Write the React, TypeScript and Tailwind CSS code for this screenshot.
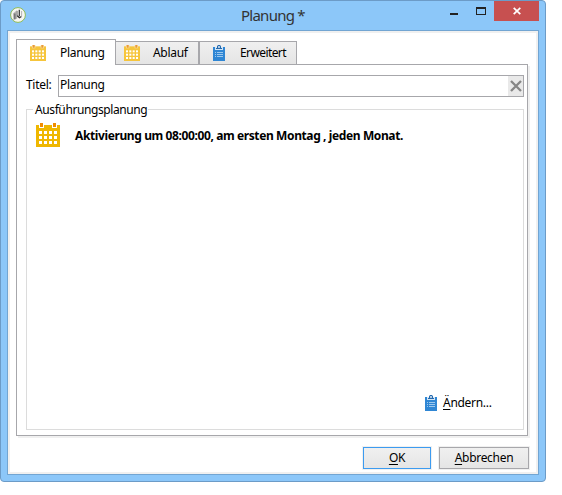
import React from "react";

function CalendarIcon({ size, soft = false }: { size: number; soft?: boolean }) {
  const body = soft ? "#f6c53c" : "#efb700";
  const clip = soft ? "#e9983a" : "#f08c00";
  return (
    <svg width={size} height={size} viewBox="0 0 24 24" shapeRendering={soft ? "auto" : "crispEdges"} className="block shrink-0">
      <rect x="0" y="2" width="24" height="22" fill={body} />
      <path d="M3 0h5v5H3zM16 0h5v5h-5z" fill={soft ? "#fbe3a0" : "#fff"} />
      <path d="M4 0h3v4H4zM17 0h3v4h-3z" fill={clip} />
      {[8, 13, 18].map((y) =>
        [3, 8, 13, 18].map((x) => <rect key={`${x}-${y}`} x={x} y={y} width="3" height="3" fill="#fff" />)
      )}
    </svg>
  );
}

function ClipboardIcon() {
  return (
    <svg width="12" height="16" viewBox="0 0 12 16" className="block shrink-0">
      <rect x="0" y="2" width="12" height="14" fill="#2f86d4" />
      <path d="M2 2h8v3H2z" fill="#d3e5f5" />
      <path d="M3 4V3h1V1.6C4 .6 4.8 0 6 0s2 .6 2 1.6V3h1v1z" fill="#2469ad" />
      <rect x="5.2" y="1.2" width="1.6" height="1.6" fill="#fff" />
      <path d="M2 7.5h1M4 7.5h6M2 9.5h1M4 9.5h6M2 11.5h1M4 11.5h6" stroke="#a9cff0" strokeWidth=".9" />
    </svg>
  );
}

function AppIcon() {
  return (
    <svg width="16" height="16" viewBox="0 0 16 16" className="block">
      <circle cx="8" cy="8" r="7.4" fill="#f6f6f2" stroke="#8dbb55" />
      <path d="M3 6.5 7.2 3v8.5L3.4 13z" fill="#b5b5b2" />
      <path d="M4.8 6.5v5.8" stroke="#77777a" strokeWidth="1.6" />
      <path d="M7.2 4v5" stroke="#777" strokeWidth=".8" />
      <path d="M9.3 2.8v6.4M7.2 8.8l2.2 2 2-1.4" stroke="#303030" strokeWidth="1.2" fill="none" />
      <path d="M11.6 4v5" stroke="#b5b5b5" />
    </svg>
  );
}

export default function App() {
  return (
    <div className="h-[495px] w-[562px] bg-white font-['Noto_Sans','Open_Sans',sans-serif] text-[12px] leading-4 tracking-[-0.3px] text-black">
      <div className="flex h-[482px] w-[546px] flex-col rounded-[4px] border border-[#6c9bc7] bg-[#8cc7f9] px-[6px] pb-[6px]">
        <header className="flex h-[29px] shrink-0 items-start">
          <div className="mt-[6px] ml-[3px] w-[126px]"><AppIcon /></div>
          <h1 className="mt-1 w-[262px] pl-[105px] text-[15px] leading-5 tracking-[-0.75px] whitespace-nowrap text-[#333]">Planung *</h1>
          <div className="ml-auto flex">
            <div className="flex h-5 w-[45px]">
              <svg width="45" height="20" viewBox="0 0 45 20" shapeRendering="crispEdges">
                <path d="M1 12h8v2H1z" fill="#222" />
                <path d="M27 6h10v8H27zM28 8v5h8V8z" fill="#222" fillRule="evenodd" />
              </svg>
            </div>
            <div className="flex h-5 w-[45px] items-center justify-center bg-[#c75050]">
              <svg width="8" height="8" viewBox="0 0 8 8"><path d="M.7.8l6.6 6.4M7.3.8.7 7.2" stroke="#fff" strokeWidth="1.7" /></svg>
            </div>
          </div>
        </header>

        <main className="h-[445px] w-[532px] border border-[#72a5d2] bg-[#f0f0f0] p-[2px]">
          <div className="h-full bg-white pt-[6px] pl-[6px]">
            <nav className="flex h-[26px] items-end">
              <div className="relative z-10 flex h-[26px] w-[100px] border border-b-0 border-[#a7a7ab] bg-white pt-[5px] pl-[13px]">
                <CalendarIcon size={16} soft />
                <span className="ml-[14px]">Planung</span>
              </div>
              <div className="flex h-6 w-[83px] border border-l-0 border-[#a7a7ab] bg-linear-to-b from-[#f0f0f0] to-[#e5e5e5] pt-[3px] pl-2">
                <CalendarIcon size={16} soft />
                <span className="ml-[13px]">Ablauf</span>
              </div>
              <div className="flex h-6 w-[98px] border border-[#a7a7ab] bg-linear-to-b from-[#f0f0f0] to-[#e5e5e5] pt-[3px] pl-[13px]">
                <ClipboardIcon />
                <span className="ml-[15px] tracking-[-0.6px]">Erweitert</span>
              </div>
            </nav>

            <section className="-mt-px h-[372px] w-[512px] border border-[#a7a7ab] bg-white pt-[10px] pl-[9px] shadow-[2px_2px_0_#f0f0f0]">
              <div className="flex h-[22px] items-start">
                <label className="mt-[2px] w-8">Titel:</label>
                <div className="flex h-[22px] w-[466px] border border-[#a7a7ab]">
                  <span className="w-[449px] pt-px pl-px">Planung</span>
                  <div className="flex w-[15px] items-center justify-center bg-[#e9e9e9]">
                    <svg width="12" height="12" viewBox="0 0 12 12"><path d="M1 1l10 10M11 1 1 11" stroke="#868686" strokeWidth="2.3" /></svg>
                  </div>
                </div>
              </div>
              <div className="mt-3 flex h-[321px] w-[498px] flex-col border border-[#dcdcdc]">
                <div className="-mt-[8px] ml-[6px] h-4 w-[115px] bg-white pl-[2px] tracking-[-0.4px] whitespace-nowrap">Ausführungsplanung</div>
                <div className="mt-[5px] ml-[9px] flex">
                  <CalendarIcon size={24} />
                  <strong className="mt-[5px] ml-[15px] font-bold tracking-[-0.39px] whitespace-nowrap">Aktivierung um 08:00:00, am ersten Montag , jeden Monat.</strong>
                </div>
                <div className="mt-auto mb-[18px] ml-[398px] flex">
                  <ClipboardIcon />
                  <span className="ml-[6px]"><u className="underline underline-offset-2">Ä</u>ndern...</span>
                </div>
              </div>
            </section>

            <footer className="mt-[11px] ml-[347px] flex gap-2">
              <button className="h-[22px] w-[68px] border border-[#3c9bf0] bg-linear-to-b from-[#f0f0f0] to-[#e5e5e5] shadow-[0_0_0_1px_#f0f0f0]"><u className="underline-offset-2">O</u>K</button>
              <button className="h-[22px] w-[90px] border border-[#a7a7ab] bg-linear-to-b from-[#f0f0f0] to-[#e5e5e5] shadow-[0_0_0_1px_#f0f0f0]"><u className="underline-offset-2">A</u>bbrechen</button>
            </footer>
          </div>
        </main>
      </div>
    </div>
  );
}
